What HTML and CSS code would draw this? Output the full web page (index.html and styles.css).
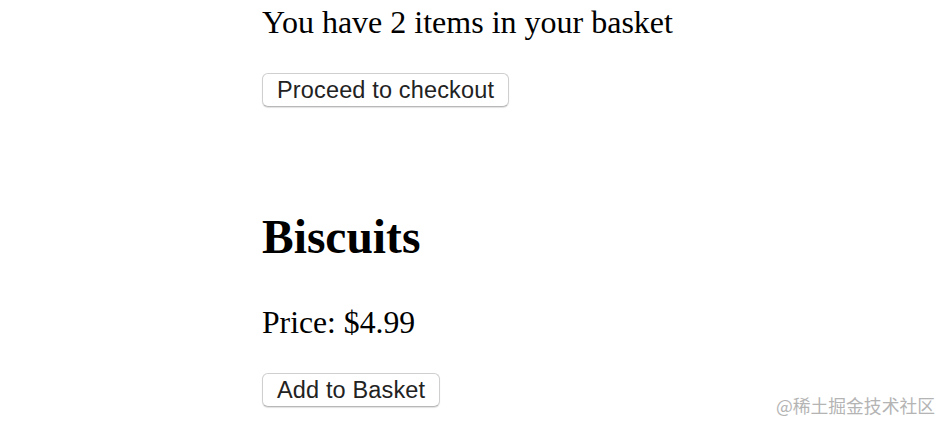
FILE: index.html
```html
<!DOCTYPE html>
<html lang="en">
<head>
<meta charset="utf-8">
<title>Basket</title>
<link rel="stylesheet" href="styles.css">
</head>
<body>
<main class="page">
  <p class="summary">You have 2 items in your basket</p>
  <button class="btn btn-checkout" type="button">Proceed to checkout</button>
  <section class="product">
    <h1 class="product-title">Biscuits</h1>
    <p class="product-price">Price: $4.99</p>
    <button class="btn" type="button">Add to Basket</button>
  </section>
</main>
<div class="watermark">@稀土掘金技术社区</div>
</body>
</html>
```
FILE: styles.css
```css
html, body {
  margin: 0;
  padding: 0;
  background: #ffffff;
}
body {
  font-family: "Liberation Serif", "Times New Roman", serif;
  color: #000;
  width: 942px;
  height: 421px;
  overflow: hidden;
  position: relative;
}
.page {
  display: flex;
  flex-direction: column;
  align-items: flex-start;
  padding: 4px 0 0 262px;
}
.summary {
  margin: 0;
  font-size: 32px;
  line-height: 36px;
}
.btn {
  font-family: "Liberation Sans", Arial, sans-serif;
  font-size: 23.5px;
  letter-spacing: 0.15px;
  color: #222;
  background: #fff;
  border: 1px solid #cfcfcf;
  border-bottom-color: #b8b8b8;
  border-radius: 6px;
  box-shadow: 0 1px 1px rgba(0,0,0,0.12);
  height: 34px;
  padding: 0 14px;
  line-height: 33px;
  margin: 0;
}
.btn-checkout {
  margin-top: 33px;
}
.product {
  display: flex;
  flex-direction: column;
  align-items: flex-start;
  margin-top: 103px;
}
.product-title {
  margin: 0;
  font-size: 47.5px;
  line-height: 55px;
  font-weight: bold;
}
.product-price {
  margin: 40px 0 32px;
  font-size: 31.7px;
  line-height: 36px;
}
.watermark {
  position: absolute;
  right: 7px;
  bottom: 6px;
  font-family: "Noto Sans CJK SC", "Liberation Sans", sans-serif;
  font-size: 17.8px;
  line-height: 20px;
  color: #b4b4b4;
}
```
